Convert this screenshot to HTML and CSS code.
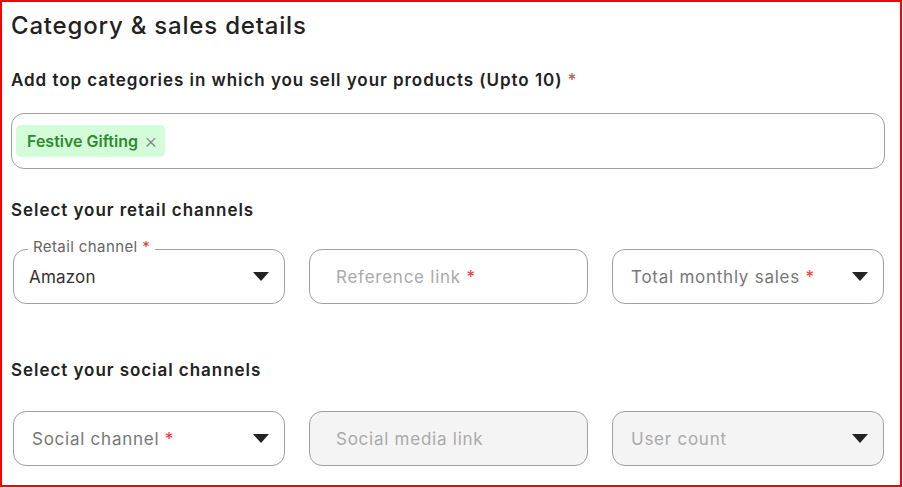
FILE: index.html
```html
<!DOCTYPE html>
<html>
<head>
<meta charset="utf-8">
<link rel="stylesheet" href="styles.css">
</head>
<body>
<div class="panel">
  <h1 class="title">Category &amp; sales details</h1>
  <div class="label first">Add top categories in which you sell your products (Upto 10) <span class="req">*</span></div>
  <div class="tagbox">
    <span class="tag">Festive Gifting <span class="x">×</span></span>
  </div>
  <div class="label second">Select your retail channels</div>
  <div class="row row1">
    <div class="field select">
      <span class="legend">Retail channel <span class="req">*</span></span>
      <span class="value">Amazon</span>
      <svg class="caret" width="16" height="9" viewBox="0 0 16 9"><path d="M0 0H16L8 9Z" fill="#222"/></svg>
    </div>
    <div class="field">
      <span class="ph">Reference link <span class="req">*</span></span>
    </div>
    <div class="field select">
      <span class="ph dark">Total monthly sales <span class="req">*</span></span>
      <svg class="caret" width="16" height="9" viewBox="0 0 16 9"><path d="M0 0H16L8 9Z" fill="#222"/></svg>
    </div>
  </div>
  <div class="label third">Select your social channels</div>
  <div class="row row2">
    <div class="field select">
      <span class="ph dark">Social channel <span class="req">*</span></span>
      <svg class="caret" width="16" height="9" viewBox="0 0 16 9"><path d="M0 0H16L8 9Z" fill="#222"/></svg>
    </div>
    <div class="field disabled">
      <span class="ph">Social media link</span>
    </div>
    <div class="field select disabled">
      <span class="ph">User count</span>
      <svg class="caret" width="16" height="9" viewBox="0 0 16 9"><path d="M0 0H16L8 9Z" fill="#222"/></svg>
    </div>
  </div>
</div>
</body>
</html>
```

FILE: styles.css
```css
* { box-sizing: border-box; }
html, body { margin: 0; padding: 0; background: #fff; }
body { font-family: Inter, "Open Sans", sans-serif; color: #222; }
.panel {
  width: 902px;
  height: 487px;
  border: 2px solid #ff0000;
  padding: 0 15px 0 9px;
  overflow: hidden;
}
.title {
  margin: 9px 0 0 0;
  font-size: 24px;
  line-height: 30px;
  font-weight: 500;
  letter-spacing: 0.8px;
  color: #222;
}
.label {
  font-size: 17px;
  line-height: 22px;
  font-weight: 600;
  letter-spacing: 0.95px;
  color: #222;
}
.label.first { margin-top: 28px; }
.label.second { margin-top: 30px; }
.label.third { margin-top: 55px; }
.req { color: #e53935; font-weight: 400; letter-spacing: 0; }
.tagbox {
  margin-top: 22px;
  height: 56px;
  border: 1px solid #a0a0a0;
  border-radius: 13px;
  padding: 11px 4px;
}
.tag {
  display: inline-flex;
  align-items: center;
  gap: 6px;
  height: 32px;
  padding: 0 7px 0 11px;
  background: #d3fcd9;
  border-radius: 5px;
  color: #2e8b2e;
  font-size: 16px;
  font-weight: 600;
}
.tag .x { color: #888; font-weight: 300; font-size: 21px; line-height: 20px; }
.row {
  display: grid;
  grid-template-columns: 272px 279px 272px;
  gap: 24px;
  margin-left: 2px;
}
.row1 { margin-top: 28px; }
.row2 { margin-top: 30px; }
.field {
  position: relative;
  height: 55px;
  border: 1px solid #a0a0a0;
  border-radius: 13px;
  display: flex;
  align-items: center;
  padding: 0 15px 0 18px;
  font-size: 17px;
  letter-spacing: 0.75px;
}
.field.disabled { background: #f4f4f4; }
.select { justify-content: space-between; }
.caret { flex: none; }
.value { color: #333; margin-left: -3px; letter-spacing: 0.2px; }
.ph { color: #aaa; margin-left: 8px; }
.ph.dark { color: #777; }
.select .ph { margin-left: 0; }
.legend {
  position: absolute;
  left: 14px;
  top: -13px;
  padding: 0 5px;
  background: #fff;
  color: #666;
  font-size: 15px;
  line-height: 20px;
  letter-spacing: 0.4px;
}
```
